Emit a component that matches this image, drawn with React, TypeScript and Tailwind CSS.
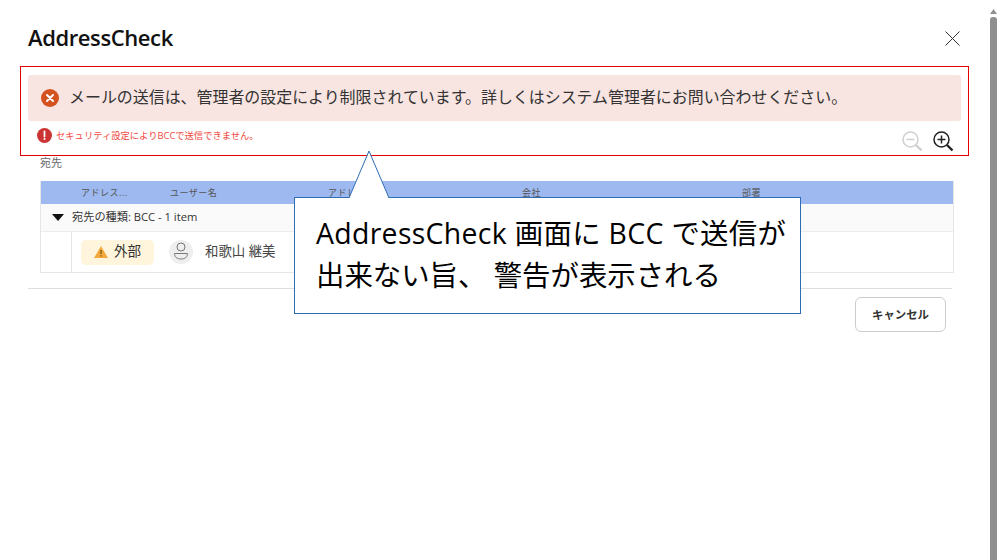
const FONT = "font-['Open_Sans','Noto_Sans_CJK_JP',sans-serif]";

function ZoomIcon({ plus, color }: { plus?: boolean; color: string }) {
    return (
        <svg width="22" height="22" viewBox="0 0 22 22" fill="none" stroke={color}>
            <circle cx="9.5" cy="9.5" r="7.5" strokeWidth="1.5" />
            <path d="M5.5 9.5h8" strokeWidth="1.5" />
            {plus && <path d="M9.5 5.5v8" strokeWidth="1.5" />}
            <path d="M15 15l5.5 5.5" strokeWidth="2.4" />
        </svg>
    );
}

function ErrorCircle() {
    return (
        <svg width="18" height="18" viewBox="0 0 18 18" className="shrink-0">
            <circle cx="9" cy="9" r="9" fill="#d4521f" />
            <path d="M6 6l6 6M12 6l-6 6" stroke="#fff" strokeWidth="2" strokeLinecap="round" />
        </svg>
    );
}

function ExclamationCircle() {
    return (
        <svg width="15" height="15" viewBox="0 0 15 15" className="shrink-0">
            <circle cx="7.5" cy="7.5" r="7.5" fill="#cc3333" />
            <path d="M7.5 3.5v5" stroke="#fff" strokeWidth="1.8" strokeLinecap="round" />
            <circle cx="7.5" cy="11" r="1" fill="#fff" />
        </svg>
    );
}

function Avatar() {
    return (
        <div className="flex h-6 w-6 items-center justify-center rounded-full bg-[#eeeeee]">
            <svg width="16" height="20" viewBox="0 0 16 20" fill="none" stroke="#777" strokeWidth="1">
                <circle cx="8" cy="5" r="4" />
                <path d="M1.5 11.5h13c0 3.5-2.5 5.5-6.5 5.5s-6.5-2-6.5-5.5z" />
            </svg>
        </div>
    );
}

export default function App() {
    return (
        <div className={`relative flex h-[560px] w-[1001px] overflow-hidden bg-white ${FONT}`}>
            <div className="w-[990px] pt-[25px] pl-[28px] pr-[29px]">
                <div className="flex h-[24px] items-center justify-between">
                    <h1 className="text-[22px] font-semibold leading-[24px] tracking-[-0.4px] text-[#111]">AddressCheck</h1>
                    <svg width="15" height="15" viewBox="0 0 15 15" fill="none" stroke="#333" strokeWidth="1" className="mr-[1px] mt-[2px]">
                        <path d="M0.5 0.5l14 14M14.5 0.5l-14 14" />
                    </svg>
                </div>

                <div className="mt-[26px] flex h-[46px] items-center gap-[10px] rounded-[3px] bg-[#f8e4e1] pl-[13px]">
                    <ErrorCircle />
                    <span className="text-[15.94px] leading-none text-[#333]">
                        メールの送信は、管理者の設定により制限されています。詳しくはシステム管理者にお問い合わせください。
                    </span>
                </div>

                <div className="flex h-[35px] items-start justify-between pr-[7px]">
                    <div className="mt-[7px] flex items-center gap-[4px] pl-[9px]">
                        <ExclamationCircle />
                        <span className="text-[9.3px] leading-none text-[#f0483e]">セキュリティ設定によりBCCで送信できません。</span>
                    </div>
                    <div className="mt-[9px] flex gap-[9px]">
                        <ZoomIcon color="#cfcfcf" />
                        <ZoomIcon plus color="#222" />
                    </div>
                </div>

                <div className="pl-[12px] text-[11px] leading-[14px] text-[#666]">宛先</div>

                <div className="mt-[11px] ml-[12px] mr-[7px] border-b border-l border-r border-[#e6e6e6]">
                    <div className="grid h-[23px] grid-cols-[89px_158px_194px_220px_1fr] items-center bg-[#9db9ef] pl-[40px] text-[9px] tracking-[0.5px] text-[#555]">
                        <span>アドレス...</span>
                        <span>ユーザー名</span>
                        <span>アドレス</span>
                        <span>会社</span>
                        <span>部署</span>
                    </div>
                    <div className="flex h-[28px] items-center border-b border-[#ececec] bg-[#fafafa] pl-[11px] text-[11.2px] text-[#333]">
                        <svg width="12" height="7" viewBox="0 0 12 7" className="mr-[8px]">
                            <path d="M0 0h12L6 7z" fill="#111" />
                        </svg>
                        宛先の種類: BCC - 1 item
                    </div>
                    <div className="ml-[30px] flex h-[40px] items-center border-l border-[#e6e6e6] pl-[9px]">
                        <div className="flex h-[25px] w-[73px] items-center justify-center gap-[6px] rounded-[5px] bg-[#fff5dc]">
                            <svg width="14" height="12" viewBox="0 0 14 12">
                                <path d="M7 0l7 12H0z" fill="#f2a93b" />
                                <path d="M7 4v4M7 9.2v1.3" stroke="#5a4310" strokeWidth="1" />
                            </svg>
                            <span className="text-[13.5px] leading-none text-[#333]">外部</span>
                        </div>
                        <div className="ml-[15px]">
                            <Avatar />
                        </div>
                        <span className="ml-[12px] text-[13.4px] leading-none text-[#444]">和歌山 継美</span>
                    </div>
                </div>

                <div className="mt-[15px] mr-[9px] border-t border-[#dedede]" />

                <div className="mt-[8px] flex justify-end pr-[15px]">
                    <button className="h-[35px] w-[91px] rounded-[6px] border border-[#cccccc] bg-white text-[11.4px] font-bold text-[#333]">
                        キャンセル
                    </button>
                </div>
            </div>

            <div className="flex w-[11px] flex-col items-start bg-white">
                <svg width="7" height="5" viewBox="0 0 7 5" className="mt-[9px] mb-[3px]">
                    <path d="M3.5 0L7 5H0z" fill="#909090" />
                </svg>
                <div className="w-[7px] flex-1 rounded-t-[3px] bg-[#8f8f8f]" />
            </div>

            {/* annotation frame */}
            <div className="absolute left-[20px] top-[66px] h-[90px] w-[949px] border border-[#e60000]" />

            {/* callout */}
            <div className="absolute left-[294px] top-[197px] h-[117px] w-[507px] border border-[#2e6db4] bg-white pl-[21px] pt-[14px] text-[28.4px] leading-[42px] text-black">
                <svg width="42" height="49" viewBox="0 0 42 49" className="absolute left-[53px] top-[-48px]">
                    <path d="M1 48L21 1l20 47" fill="#fff" stroke="#2e6db4" />
                </svg>
                <div className="whitespace-nowrap tracking-[0.33px]">AddressCheck 画面に BCC で送信が</div>
                <div className="whitespace-nowrap">出来ない旨、 警告が表示される</div>
            </div>
        </div>
    );
}
